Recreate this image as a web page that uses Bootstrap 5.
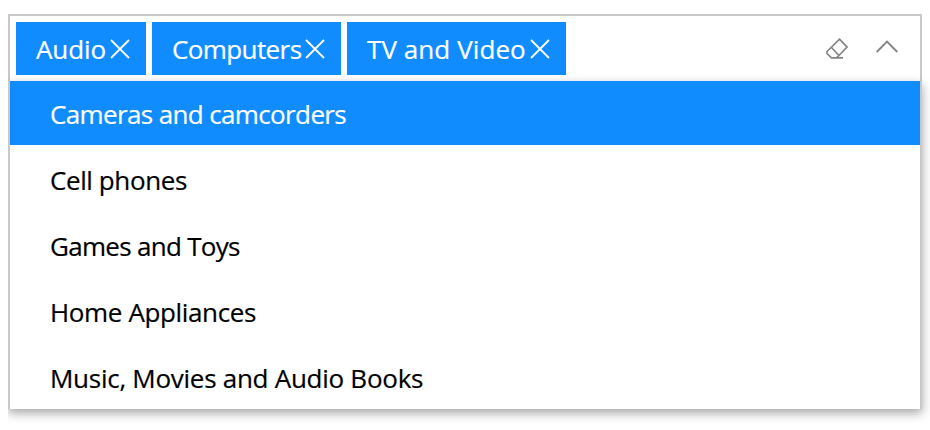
<!DOCTYPE html>
<html lang="en">
<head>
<meta charset="utf-8">
<title>Tag box</title>
<link href="https://cdn.jsdelivr.net/npm/bootstrap@5.3.0/dist/css/bootstrap.min.css" rel="stylesheet">
<style>
body{font-family:"Open Sans","Noto Sans",sans-serif;font-size:26px;line-height:36px;color:#000;background:#fff;overflow:hidden;min-height:430px;padding:14px 8px 0;-webkit-text-stroke:.2px currentColor}
.tagbox{height:395px;clip-path:inset(0 -8px -21px 0)}
.field{height:67px;padding:6px 22px 6px 6px;gap:6px;border:2px solid #c8c8c8;border-bottom:0}
.tag{height:53px;background:#108cff;color:#fff;padding:0 16px 0 20px}
.t1{width:130px;letter-spacing:-.1px}.t2{width:189px;letter-spacing:-.6px}.t3{width:219px;letter-spacing:.08px}
.tools{gap:28px;color:#858585}
.tools svg:last-child{margin-top:-4px}
.tools svg:first-child{margin-top:-1px}
.options{height:328px;background:#fff;border:solid #c8c8c8;border-width:0 2px;box-shadow:0 4px 10px rgba(0,0,0,.36)}
.options .list-group-item{height:66px;padding:3px 40px 0;color:#000;background:transparent}
.options .list-group-item.active{height:64px;margin:0 0 1px;background:#108cff;color:#fff}
.o1{letter-spacing:-.63px}.o2{letter-spacing:-.4px}.o3{letter-spacing:-.7px}.o4{letter-spacing:-.36px}.o5{letter-spacing:-.27px}
</style>
<script src="https://cdn.jsdelivr.net/npm/bootstrap@5.3.0/dist/js/bootstrap.bundle.min.js"></script>
</head>
<body>
<div class="tagbox">
  <div class="field d-flex align-items-start">
    <div class="tag t1 d-flex align-items-center justify-content-between text-nowrap"><span>Audio</span><svg width="20" height="20" viewBox="0 0 20 20" fill="none" stroke="currentColor" stroke-width="1.8"><path d="M1 1l18 18M19 1L1 19"/></svg></div>
    <div class="tag t2 d-flex align-items-center justify-content-between text-nowrap"><span>Computers</span><svg width="20" height="20" viewBox="0 0 20 20" fill="none" stroke="currentColor" stroke-width="1.8"><path d="M1 1l18 18M19 1L1 19"/></svg></div>
    <div class="tag t3 d-flex align-items-center justify-content-between text-nowrap"><span>TV and Video</span><svg width="20" height="20" viewBox="0 0 20 20" fill="none" stroke="currentColor" stroke-width="1.8"><path d="M1 1l18 18M19 1L1 19"/></svg></div>
    <div class="tools d-flex ms-auto align-items-center h-100">
      <svg width="22" height="21" viewBox="0 0 22 21" fill="none" stroke="currentColor" stroke-width="1.7"><path d="M13.500 1.200L21 9l-9 9.500-1.500 1.300H5.500L1 15.500v-2zM5.500 9.500l7.500 8M5 19.900h12"/></svg>
      <svg width="22" height="13" viewBox="0 0 22 13" fill="none" stroke="currentColor" stroke-width="1.9"><path d="M.7 12L11 1.500 21.300 12"/></svg>
    </div>
  </div>
  <div class="options list-group list-group-flush rounded-0">
    <div class="list-group-item border-0 active d-flex align-items-center"><span class="o1">Cameras and camcorders</span></div>
    <div class="list-group-item border-0 d-flex align-items-center"><span class="o2">Cell phones</span></div>
    <div class="list-group-item border-0 d-flex align-items-center"><span class="o3">Games and Toys</span></div>
    <div class="list-group-item border-0 d-flex align-items-center"><span class="o4">Home Appliances</span></div>
    <div class="list-group-item border-0 d-flex align-items-center"><span class="o5">Music, Movies and Audio Books</span></div>
  </div>
</div>
</body>
</html>
